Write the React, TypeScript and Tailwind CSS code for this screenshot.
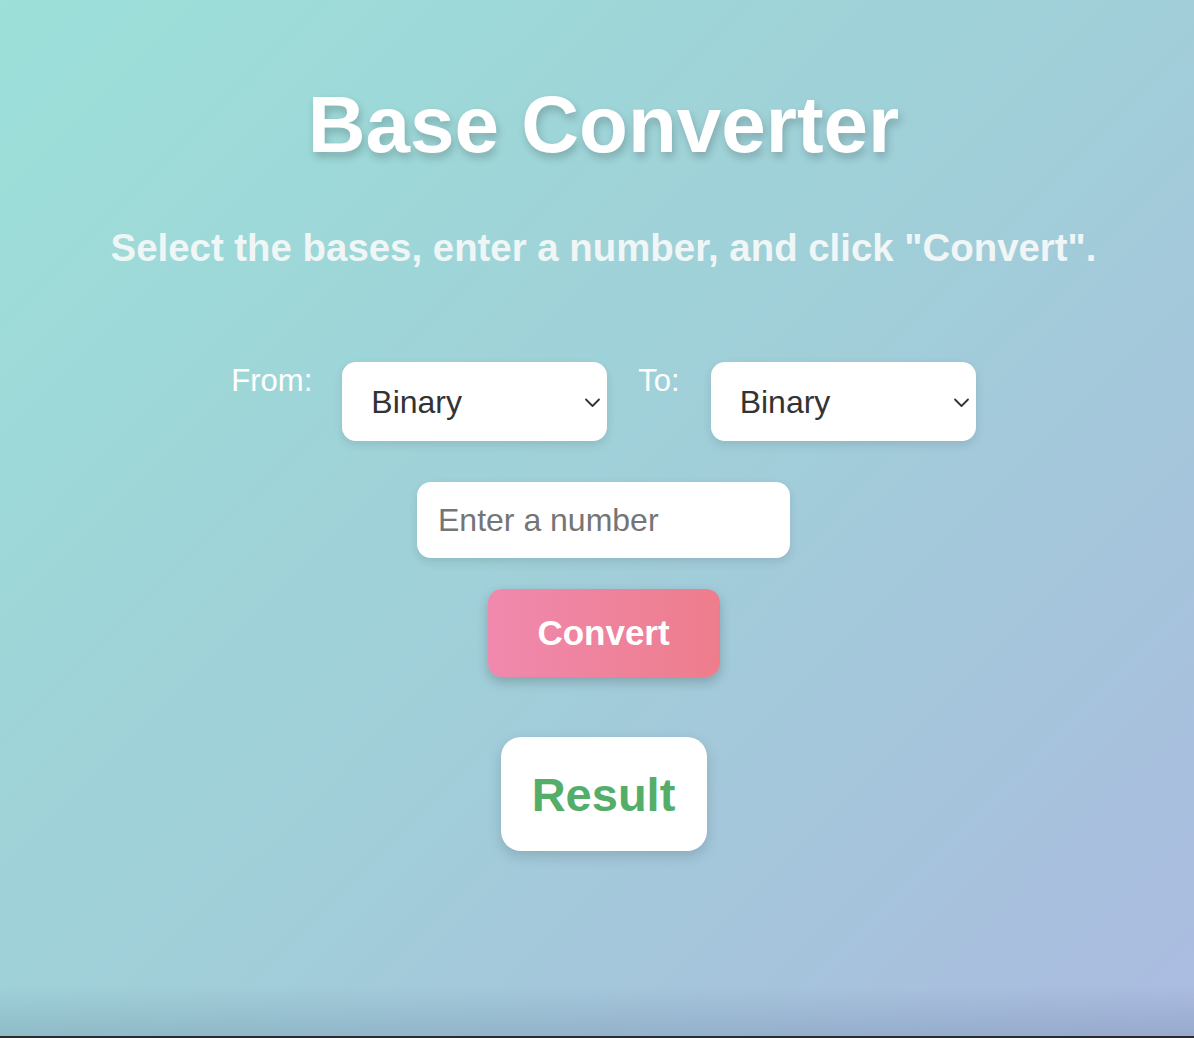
import { useState } from 'react';

const BASES = ['Binary', 'Octal', 'Decimal', 'Hexadecimal'];

function BaseSelect({ value, onChange }: { value: string; onChange: (v: string) => void }) {
  return (
    <div className="relative">
      <select
        value={value}
        onChange={e => onChange(e.target.value)}
        className="appearance-none w-[265px] h-[79px] rounded-[14px] bg-white pl-[29px] pr-10 text-[32px] text-[#333] outline-none shadow-[0_4px_10px_rgba(0,0,0,0.1)]"
      >
        {BASES.map(b => (
          <option key={b} value={b}>{b}</option>
        ))}
      </select>
      <svg
        className="pointer-events-none absolute right-[6px] top-[35px] w-[17px] h-[11px]"
        viewBox="0 0 17 11"
        fill="none"
        stroke="#333"
        strokeWidth="1.8"
        strokeLinecap="round"
        strokeLinejoin="round"
      >
        <path d="M2 2.5 L8.5 9 L15 2.5" />
      </svg>
    </div>
  );
}

export default function App() {
  const [from, setFrom] = useState('Binary');
  const [to, setTo] = useState('Binary');
  const [num, setNum] = useState('');

  return (
    <div className="relative min-h-[1038px] w-full overflow-hidden bg-[linear-gradient(135deg,#9ce0d9_0%,#a0cfd8_50%,#abbbe0_100%)] font-['Liberation_Sans',Arial,sans-serif]">
      <div className="flex flex-col items-center pl-[13px] pt-[85px]">
        <h1 className="text-[80px] leading-[80px] font-bold text-white [text-shadow:2px_5px_8px_rgba(0,0,0,0.2)]">
          Base Converter
        </h1>
        <p className="mt-[64px] text-[38.4px] leading-[38px] font-bold text-[#f0f6f6]">
          Select the bases, enter a number, and click "Convert".
        </p>

        <div className="mt-[95px] flex items-start">
          <label className="mt-[3px] text-[31px] leading-[31px] text-white">From:</label>
          <div className="ml-[30px]">
            <BaseSelect value={from} onChange={setFrom} />
          </div>
          <label className="ml-[31px] mt-[3px] text-[31px] leading-[31px] text-white">To:</label>
          <div className="ml-[31px]">
            <BaseSelect value={to} onChange={setTo} />
          </div>
        </div>

        <input
          value={num}
          onChange={e => setNum(e.target.value)}
          placeholder="Enter a number"
          className="mt-[41px] w-[373px] h-[76px] rounded-[14px] bg-white px-[21px] text-[32px] text-[#333] placeholder:text-[#757575] outline-none shadow-[0_4px_10px_rgba(0,0,0,0.1)]"
        />

        <button className="mt-[31px] w-[232px] h-[88px] rounded-[14px] bg-[linear-gradient(90deg,#f089ae,#ee7d8c)] text-[35px] font-bold text-white shadow-[0_5px_12px_rgba(0,0,0,0.2)]">
          Convert
        </button>

        <div className="mt-[60px] w-[206px] h-[114px] flex items-center justify-center rounded-[20px] bg-white shadow-[0_5px_14px_rgba(0,0,0,0.15)]">
          <span className="text-[47px] leading-[47px] font-bold text-[#55ad6a]">Result</span>
        </div>
      </div>

      <div className="pointer-events-none absolute inset-x-0 bottom-[2px] h-[50px] bg-[linear-gradient(180deg,rgba(0,0,0,0),rgba(20,40,80,0.12))]" />
      <div className="absolute inset-x-0 bottom-0 h-[2px] bg-[#2b2b2e]" />
    </div>
  );
}
